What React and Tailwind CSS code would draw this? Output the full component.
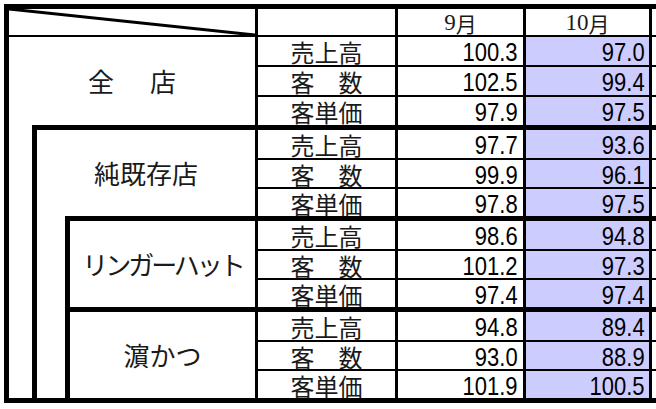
import React from "react";

const groups = [
  { rows: [["売上高", "100.3", "97.0"], ["客　数", "102.5", "99.4"], ["客単価", "97.9", "97.5"]] },
  { rows: [["売上高", "97.7", "93.6"], ["客　数", "99.9", "96.1"], ["客単価", "97.8", "97.5"]] },
  { rows: [["売上高", "98.6", "94.8"], ["客　数", "101.2", "97.3"], ["客単価", "97.4", "97.4"]] },
  { rows: [["売上高", "94.8", "89.4"], ["客　数", "93.0", "88.9"], ["客単価", "101.9", "100.5"]] },
];

const jp = "font-['Noto_Sans_CJK_JP',sans-serif]";
const num = "font-['Liberation_Sans',Arial,sans-serif]";

function Row({ cells, first, g }) {
  const h = g === 0 ? (first ? "h-[28px]" : "h-[30px] border-t-2") : first ? "h-[28px]" : "h-[29px] border-t-2";
  return (
    <div className={`flex ${h} border-black`}>
      <div className={`w-[140px] shrink-0 border-r-[3px] border-black flex items-center justify-center pt-[2px] ${jp} text-[24px] leading-none text-[#1a1a1a] whitespace-pre`}>
        {cells[0]}
      </div>
      <div className={`w-[128px] shrink-0 border-r-[3px] border-black flex items-center justify-end pr-[5px] pt-[3px] ${num} text-[25px] leading-none text-black`}>
        <span className="inline-block origin-right scale-x-[0.88]">{cells[1]}</span>
      </div>
      <div className={`w-[126px] shrink-0 border-r-[3px] border-black bg-[#ccccff] flex items-center justify-end pr-[4px] pt-[3px] ${num} text-[25px] leading-none text-black`}>
        <span className="inline-block origin-right scale-x-[0.88]">{cells[2]}</span>
      </div>
      <div className="flex-1" />
    </div>
  );
}

function Month({ n, w }) {
  return (
    <div className={`${w} shrink-0 border-r-[3px] border-black flex items-end justify-center pb-[1px] leading-none text-[#1a1a1a]`}>
      <span className="font-['Liberation_Serif',serif] text-[23px]">{n}</span>
      <span className="font-['Noto_Sans_CJK_JP',sans-serif] text-[21px]">月</span>
    </div>
  );
}

export default function App() {
  return (
    <div className="w-[656px] h-[409px] bg-white overflow-hidden pl-[4px] pt-[4px]">
      <div className="w-[720px] border-t-[5px] border-l-[5px] border-b-[5px] border-black">
        {/* header */}
        <div className="flex h-[28px] border-b-2 border-black">
          <div className="w-[249px] shrink-0 border-r-[3px] border-black relative">
            <svg className="absolute inset-0" width="246" height="26" viewBox="0 0 246 26">
              <line x1="0" y1="0" x2="246" y2="26" stroke="black" strokeWidth="3" />
            </svg>
          </div>
          <div className="w-[140px] shrink-0 border-r-[3px] border-black" />
          <Month n="9" w="w-[128px]" />
          <Month n="10" w="w-[126px]" />
          <div className="flex-1" />
        </div>
        {/* body */}
        <div className="flex">
          <div className={`w-[249px] shrink-0 border-r-[3px] border-black flex flex-col ${jp} text-[26px] leading-none text-[#1a1a1a]`}>
            <div className="h-[88px] flex items-center justify-center gap-[36px]">
              <span>全</span>
              <span>店</span>
            </div>
            <div className="flex">
              <div className="w-[23px] shrink-0" />
              <div className="flex-1 border-l-[5px] border-t-[5px] border-black flex flex-col">
                <div className="h-[86px] flex items-center justify-center">純既存店</div>
                <div className="flex">
                  <div className="w-[28px] shrink-0" />
                  <div className="flex-1 border-l-[5px] border-t-[5px] border-black flex flex-col">
                    <div className="h-[86px] flex items-center justify-center tracking-[-3px]">リンガーハット</div>
                    <div className="h-[91px] border-t-[5px] border-black flex items-center justify-center">濵かつ</div>
                  </div>
                </div>
              </div>
            </div>
          </div>
          <div className="flex-1 flex flex-col">
            {groups.map((g, gi) => (
              <div key={gi} className={gi > 0 ? "border-t-[5px] border-black" : ""}>
                {g.rows.map((r, ri) => (
                  <Row key={ri} cells={r} first={ri === 0} g={gi} />
                ))}
              </div>
            ))}
          </div>
        </div>
      </div>
    </div>
  );
}
